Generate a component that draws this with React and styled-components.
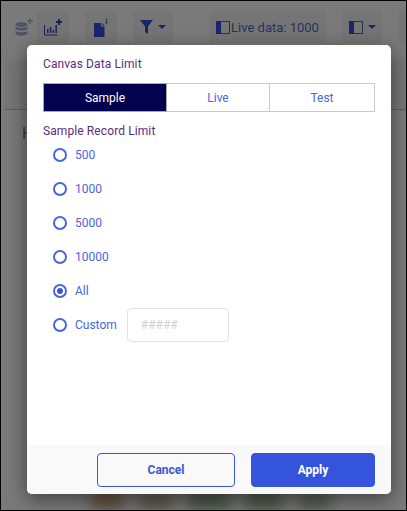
import React, { useState } from "react";
import styled, { createGlobalStyle } from "styled-components";

const limits = ["500", "1000", "5000", "10000", "All"];
const tabs = ["Sample", "Live", "Test"];

export default function App() {
  const [tab, setTab] = useState("Sample");
  const [limit, setLimit] = useState("All");

  return (
    <Screen>
      <GlobalStyle />
      <Toolbar>
        <ToolGhost>
          <DbIcon />
        </ToolGhost>
        <ToolButton $width={32}>
          <ChartIcon />
        </ToolButton>
        <ToolButton $width={32} $gap={16}>
          <DocIcon />
        </ToolButton>
        <ToolButton $width={40} $gap={16}>
          <FilterIcon />
          <Caret />
        </ToolButton>
        <ToolButton $width={117} $gap={36}>
          <PanelIcon />
          <LiveText>Live data: 1000</LiveText>
        </ToolButton>
        <ToolButton $width={40} $gap={16}>
          <PanelIcon />
          <Caret />
        </ToolButton>
        <ToolButton $width={32} $gap={16} />
      </Toolbar>
      <Panel>
        <PanelHead />
        <PanelBody>H</PanelBody>
      </Panel>
      <Heatmap>
        <Blob $color="#b98a50" $width={34} />
        <Blob $color="#a8a070" $width={36} />
        <Blob $color="#6f9a68" $width={44} />
        <Blob $color="#789c6c" $width={40} />
        <Blob $color="#90ac80" $width={34} />
      </Heatmap>

      <Overlay>
        <Modal>
          <ModalBody>
            <Heading>Canvas Data Limit</Heading>
            <Segments>
              {tabs.map(t => (
                <Segment key={t} $active={tab === t} $name={t} onClick={() => setTab(t)}>
                  {t}
                </Segment>
              ))}
            </Segments>
            <SubHeading>Sample Record Limit</SubHeading>
            <RadioList>
              {limits.map(l => (
                <RadioRow key={l} onClick={() => setLimit(l)}>
                  <RadioDot $checked={limit === l} />
                  <RadioLabel>{l}</RadioLabel>
                </RadioRow>
              ))}
              <RadioRow onClick={() => setLimit("Custom")}>
                <RadioDot $checked={limit === "Custom"} />
                <RadioLabel>Custom</RadioLabel>
                <CustomInput placeholder="#####" />
              </RadioRow>
            </RadioList>
          </ModalBody>
          <Footer>
            <CancelButton>Cancel</CancelButton>
            <ApplyButton>Apply</ApplyButton>
          </Footer>
        </Modal>
      </Overlay>
    </Screen>
  );
}

// Iconos de la barra
const DbIcon = () => (
  <svg width="18" height="18" viewBox="0 0 18 18">
    <g fill="#a4afd8">
      <ellipse cx="6.500" cy="6.500" rx="6" ry="2.500" />
      <path d="M0.500 8.500c2 1.800 10 1.800 12 0v2.500c-2 2-10 2-12 0z" />
      <path d="M0.500 13c2 1.800 10 1.800 12 0v2.500c-1.500 3-10.500 3-12 0z" />
    </g>
    <path d="M12 3h6M15 0v6" stroke="#b4b4c4" strokeWidth="1.500" />
  </svg>
);

const ChartIcon = () => (
  <svg width="18" height="17" viewBox="0 0 18 17">
    <path d="M0.500 6v10h13" fill="none" stroke="#3a48b8" strokeWidth="1" />
    <path d="M3 10h1.500v4H3zM5.800 8h1.500v6H5.800zM8.600 11h1.500v3H8.600zM11.400 6h1.500v8h-1.500z" fill="#3a48b8" />
    <path d="M12 3h6M15 0v6" stroke="#3a48c0" strokeWidth="2" />
  </svg>
);

const DocIcon = () => (
  <svg width="16" height="20" viewBox="0 0 16 20">
    <path d="M1 6h7v3.500h3.500V20H1z" fill="#3450e0" />
    <path d="M9 6l2.500 2.500H9z" fill="#3450e0" />
    <path d="M13.500 1v5" stroke="#8a8ab4" strokeWidth="1.200" />
    <path d="M11.800 5h3.400l-1.700 2.500z" fill="#8a8ab4" />
  </svg>
);

const FilterIcon = () => (
  <svg width="13" height="14" viewBox="0 0 13 14">
    <path d="M0 0h13L8 6.500V14l-3-2V6.500z" fill="#3450d8" />
  </svg>
);

const PanelIcon = () => (
  <svg width="14" height="13" viewBox="0 0 14 13">
    <rect x="0.500" y="0.500" width="13" height="12" fill="none" stroke="#5a62c0" />
    <rect x="0" y="0" width="5" height="13" fill="#3450e0" />
  </svg>
);

const GlobalStyle = createGlobalStyle`
  html, body {
    margin: 0;
    padding: 0;
    background: #000;
  }
  body {
    font-family: Roboto, "Liberation Sans", sans-serif;
  }
`;

const Screen = styled.div`
  position: relative;
  width: 405px;
  height: 509px;
  margin-top: 1px;
  margin-left: 1px;
  background: #fff;
  overflow: hidden;
  display: flex;
  flex-direction: column;
`;

const Toolbar = styled.div`
  display: flex;
  align-items: stretch;
  height: 32px;
  padding: 10px 0 0 6px;
  flex-shrink: 0;
`;

const ToolGhost = styled.div`
  width: 30px;
  padding-left: 4px;
  box-sizing: border-box;
  display: flex;
  align-items: center;
  justify-content: center;
  flex-shrink: 0;
`;

const ToolButton = styled.div`
  width: ${p => p.$width}px;
  margin-left: ${p => p.$gap || 0}px;
  flex-shrink: 0;
  display: flex;
  align-items: center;
  justify-content: center;
  gap: 5px;
  background: #f5f5f5;
  border-radius: 4px;
`;

const LiveText = styled.span`
  font-size: 13px;
  color: #5a68c4;
  margin-left: -4px;
  white-space: nowrap;
`;

const Caret = styled.span`
  width: 0;
  height: 0;
  border-left: 4px solid transparent;
  border-right: 4px solid transparent;
  border-top: 4px solid #3450d8;
`;

const Panel = styled.div`
  margin: 16px 0 0 4px;
  flex: 1;
  display: flex;
  flex-direction: column;
  background: #fff;
`;

const PanelHead = styled.div`
  height: 50px;
  background: #f7f7f7;
  border-bottom: 1px solid #c4c4c4;
  border-radius: 4px 4px 0 0;
`;

const PanelBody = styled.div`
  padding: 14px 0 0 17px;
  font-size: 16px;
  color: #777;
`;

const Heatmap = styled.div`
  position: absolute;
  left: 90px;
  right: 75px;
  bottom: 0;
  height: 20px;
  display: flex;
  justify-content: space-between;
  filter: blur(7px);
  opacity: 0.75;
`;

const Blob = styled.div`
  width: ${p => p.$width}px;
  background: ${p => p.$color};
`;

const Overlay = styled.div`
  position: absolute;
  inset: 0;
  background: rgba(0, 0, 0, 0.52);
`;

const Modal = styled.div`
  position: absolute;
  left: 26px;
  top: 44px;
  width: 364px;
  height: 449px;
  background: #fff;
  border-radius: 5px;
  box-shadow: 0 5px 20px rgba(0, 0, 0, 0.5);
  display: flex;
  flex-direction: column;
  overflow: hidden;
`;

const ModalBody = styled.div`
  flex: 1;
  padding: 12px 16px 0;
`;

const Heading = styled.div`
  font-size: 12px;
  line-height: 14px;
  color: #5f2a80;
  letter-spacing: 0.1px;
`;

const Segments = styled.div`
  display: grid;
  grid-template-columns: 124px 103px 105px;
  height: 29px;
  margin-top: 12px;
`;

const Segment = styled.div`
  display: flex;
  align-items: center;
  justify-content: center;
  box-sizing: border-box;
  font-size: 12px;
  cursor: pointer;
  border: 1px solid ${p => (p.$active ? "#a9a9a9" : "#c9c9c9")};
  border-left-width: ${p => (p.$name === "Sample" ? 1 : 0)}px;
  background: ${p => (p.$active ? "#02024f" : "#fff")};
  color: ${p => (p.$active ? "#fff" : "#4a65e0")};
`;

const SubHeading = styled(Heading)`
  margin-top: 12px;
`;

const RadioList = styled.div`
  display: flex;
  flex-direction: column;
  padding-left: 10px;
`;

const RadioRow = styled.div`
  display: flex;
  align-items: center;
  height: 34px;
  cursor: pointer;
`;

const RadioDot = styled.span`
  box-sizing: border-box;
  width: 14px;
  height: 14px;
  border: 2px solid #4a65e0;
  border-radius: 50%;
  flex-shrink: 0;
  display: flex;
  align-items: center;
  justify-content: center;
  &::after {
    content: "";
    display: ${p => (p.$checked ? "block" : "none")};
    width: 6px;
    height: 6px;
    border-radius: 50%;
    background: #3a57dc;
  }
`;

const RadioLabel = styled.span`
  margin-left: 8px;
  font-size: 12px;
  color: #4a65e0;
`;

const CustomInput = styled.input`
  box-sizing: border-box;
  width: 102px;
  height: 34px;
  margin-left: 10px;
  padding: 0 13px;
  border: 1px solid #e3e3e3;
  border-radius: 4px;
  outline: none;
  font-family: Roboto, sans-serif;
  font-size: 12px;
  &::placeholder {
    color: #d2d2d2;
    opacity: 1;
  }
`;

const Footer = styled.div`
  height: 49px;
  box-sizing: border-box;
  background: #f9f9f9;
  display: flex;
  justify-content: flex-end;
  gap: 16px;
  padding: 8px 16px 7px;
`;

const CancelButton = styled.button`
  box-sizing: border-box;
  width: 138px;
  background: transparent;
  border: 1px solid #3a57dc;
  border-radius: 4px;
  color: #3a57dc;
  font-family: Roboto, sans-serif;
  font-size: 12px;
  font-weight: 700;
  cursor: pointer;
`;

const ApplyButton = styled(CancelButton)`
  width: 124px;
  background: #3455db;
  border-color: #3455db;
  color: #fff;
`;
